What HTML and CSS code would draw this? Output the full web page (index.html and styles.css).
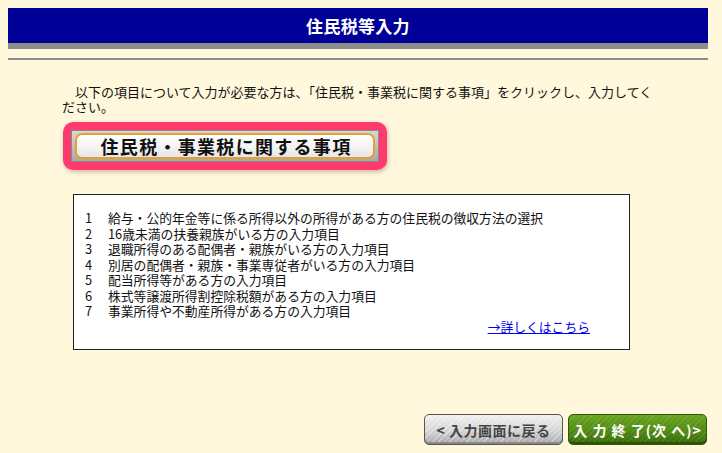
FILE: index.html
```html
<!DOCTYPE html>
<html lang="ja">
<head>
<meta charset="utf-8">
<title>住民税等入力</title>
<link rel="stylesheet" href="styles.css">
</head>
<body>
<div class="page">
  <header class="title-bar"><h1>住民税等入力</h1></header>
  <div class="rule"></div>
  <p class="intro">　以下の項目について入力が必要な方は、「住民税・事業税に関する事項」をクリックし、入力してください。</p>
  <div class="highlight">
    <button class="tax-btn" type="button"><span class="tax-face">住民税・事業税に関する事項</span></button>
  </div>
  <div class="info-box">
    <ol class="items">
      <li><span class="num">1</span><span>給与・公的年金等に係る所得以外の所得がある方の住民税の徴収方法の選択</span></li>
      <li><span class="num">2</span><span>16歳未満の扶養親族がいる方の入力項目</span></li>
      <li><span class="num">3</span><span>退職所得のある配偶者・親族がいる方の入力項目</span></li>
      <li><span class="num">4</span><span>別居の配偶者・親族・事業専従者がいる方の入力項目</span></li>
      <li><span class="num">5</span><span>配当所得等がある方の入力項目</span></li>
      <li><span class="num">6</span><span>株式等譲渡所得割控除税額がある方の入力項目</span></li>
      <li><span class="num">7</span><span>事業所得や不動産所得がある方の入力項目</span></li>
    </ol>
    <div class="more"><a href="#">→詳しくはこちら</a></div>
  </div>
  <div class="nav">
    <button class="nav-btn back" type="button">&lt; 入力画面に戻る</button>
    <button class="nav-btn next" type="button">入 力 終 了(次 へ)&gt;</button>
  </div>
</div>
</body>
</html>
```
FILE: styles.css
```css
html, body {
  margin: 0;
  padding: 0;
  background: #fff8dc;
}
body {
  padding: 8px;
  font-family: "Noto Sans CJK JP", "Liberation Sans", sans-serif;
  color: #111;
}
.page {
  width: 700px;
}
.title-bar {
  height: 35px;
  background: #000099;
  border-bottom: 6px solid #8c8c88;
  display: flex;
  align-items: center;
  justify-content: center;
}
.title-bar h1 {
  margin: 0;
  color: #fff;
  font-size: 17px;
  font-weight: bold;
  line-height: 1;
  letter-spacing: 0.3px;
}
.rule {
  margin-top: 9px;
  height: 2px;
  background: #8c8c88;
}
.intro {
  margin: 24px 0 0 54px;
  width: 600px;
  font-size: 13px;
  line-height: 15px;
  color: #111;
}
.highlight {
  margin: 8px 0 0 55px;
  width: fit-content;
  padding: 8px;
  background: #ff3a6c;
  border-radius: 10px;
  box-shadow: 1px 2px 4px rgba(120, 60, 60, 0.35);
}
.tax-btn {
  display: block;
  margin: 0;
  width: 308px;
  height: 32px;
  padding: 2px 3px;
  border: 1px solid #8a8a8a;
  background: linear-gradient(#d8d8d8, #a8a8a8);
  cursor: pointer;
  font-family: inherit;
}
.tax-face {
  display: flex;
  align-items: center;
  justify-content: center;
  height: 100%;
  box-sizing: border-box;
  border: 2px solid #e8a02c;
  border-radius: 7px;
  background: linear-gradient(#ffffff, #f2f2f2 60%, #e6e6e6);
  font-size: 18px;
  font-weight: bold;
  letter-spacing: 1.3px;
  color: #111;
  padding-left: 2px;
}
.info-box {
  margin: 24px 0 0 65px;
  width: 555px;
  height: 153px;
  border: 1px solid #222;
  background: #fff;
  padding: 15px 39px 0 11px;
  box-sizing: content-box;
  width: 505px;
  height: 139px;
}
.items {
  margin: 0;
  padding: 0;
  list-style: none;
  font-size: 12.8px;
  line-height: 15.5px;
}
.items li {
  display: grid;
  grid-template-columns: 23px 1fr;
}
.more {
  text-align: right;
  font-size: 12.8px;
  line-height: 15.5px;
}
.more a {
  color: #0000ee;
  text-decoration: underline;
}
.nav {
  margin-top: 64px;
  display: flex;
  justify-content: flex-end;
  gap: 5px;
  padding-right: 1px;
}
.nav-btn {
  width: 139px;
  height: 31px;
  border-radius: 5px;
  font-family: inherit;
  font-size: 14px;
  font-weight: bold;
  padding: 0;
  cursor: pointer;
}
.back {
  border: 1px solid #555;
  color: #444;
  letter-spacing: 0.5px;
  background:
    repeating-linear-gradient(135deg, rgba(255,255,255,0.35) 0 1px, rgba(255,255,255,0) 1px 4px),
    linear-gradient(#f0f0f0, #d4d4d4 55%, #a6a6a6);
  box-shadow: inset 0 -2px 0 #8a8a8a;
}
.next {
  border: 1px solid #2f5a08;
  color: #fff;
  letter-spacing: 1px;
  background:
    repeating-linear-gradient(135deg, rgba(255,255,255,0.1) 0 1px, rgba(255,255,255,0) 1px 4px),
    linear-gradient(#6aa420, #4f8a12 55%, #3a6a08);
  box-shadow: inset 0 -2px 0 #2c5206;
}
```
